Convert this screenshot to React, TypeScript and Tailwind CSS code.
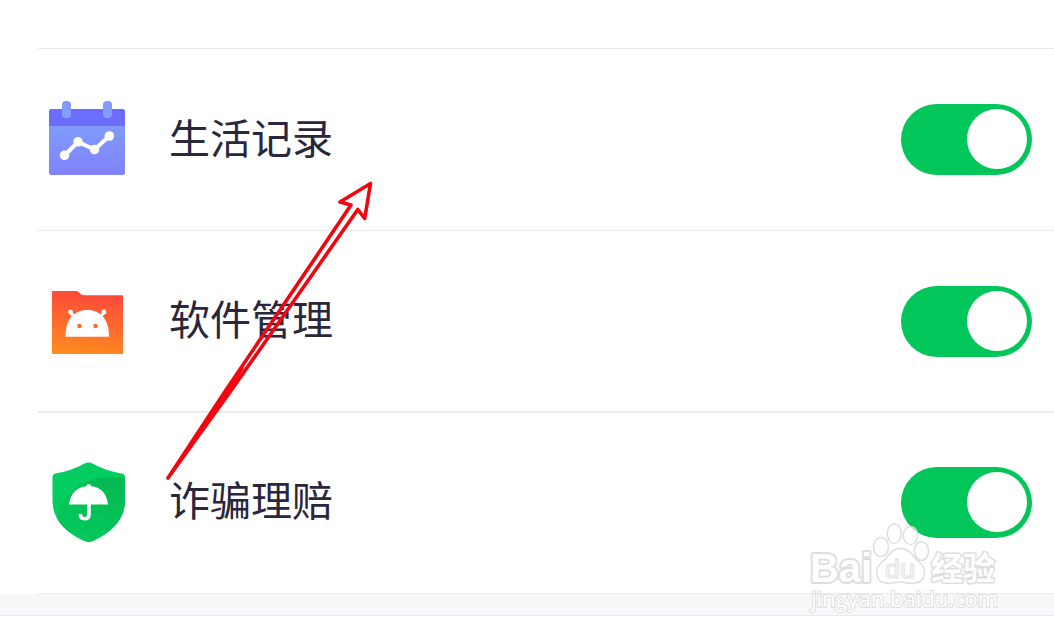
import React from 'react';

const CalendarIcon: React.FC = () => (
    <svg className="block" width="78" height="78" viewBox="48 101 78 78">
        <defs>
            <linearGradient id="calBody" x1="0" y1="0" x2="0" y2="1">
                <stop offset="0.2" stopColor="#7f9cfd" />
                <stop offset="1" stopColor="#8282fb" />
            </linearGradient>
            <linearGradient id="calRing" x1="0" y1="0" x2="0" y2="1">
                <stop offset="0" stopColor="#8894fc" />
                <stop offset="1" stopColor="#7ba4fc" />
            </linearGradient>
        </defs>
        <rect x="49" y="109" width="76" height="66" rx="2.5" fill="url(#calBody)" />
        <path d="M49 126V111.500Q49 109 51.500 109H122.500Q125 109 125 111.500V126Z" fill="#6c6cfd" />
        <rect x="62" y="101" width="9" height="17" rx="4" fill="url(#calRing)" />
        <rect x="103" y="101" width="9" height="17" rx="4" fill="url(#calRing)" />
        <path d="M64.500 155.500L78 142L94.500 149.500L109.500 136" fill="none" stroke="#fff" strokeWidth="4" />
        <circle cx="64.500" cy="155.300" r="4.800" fill="#fff" />
        <circle cx="78" cy="141.800" r="4.800" fill="#fff" />
        <circle cx="94.500" cy="149.500" r="4.800" fill="#fff" />
        <circle cx="109.300" cy="136" r="4.800" fill="#fff" />
    </svg>
);

const FolderIcon: React.FC = () => (
    <svg className="block" width="78" height="78" viewBox="48 282 78 78">
        <defs>
            <linearGradient id="folderBody" x1="0.55" y1="0" x2="0.4" y2="1">
                <stop offset="0" stopColor="#fd473c" />
                <stop offset="1" stopColor="#ff8a1e" />
            </linearGradient>
        </defs>
        <path d="M52 291H76Q78 291 79.500 292.800Q81.500 295.300 84 295.300H123V354H52Z" fill="url(#folderBody)" />
        <path d="M65.500 336.800C65.500 319 74 310 87.200 310S109 319 109 336.800Z" fill="#fff" />
        <path d="M70.500 312L74.500 318M104 312L100 318" stroke="#fff" strokeWidth="3" strokeLinecap="round" />
        <circle cx="70.500" cy="312" r="2.400" fill="#fff" />
        <circle cx="104" cy="312" r="2.400" fill="#fff" />
        <circle cx="79.500" cy="326" r="2.300" fill="#ff6b2d" />
        <circle cx="95.500" cy="326" r="2.300" fill="#ff6b2d" />
    </svg>
);

const ShieldIcon: React.FC = () => (
    <svg className="block" width="78" height="82" viewBox="48 461 78 82">
        <defs>
            <clipPath id="shieldClip">
                <path d="M84.500 463.500Q88.500 461.500 92.500 463.500Q106 471 122 473.500Q125 474.200 125 477V501C125 519 112 532 93.500 540.800Q88.500 543 84 540.800C65 532 52.500 519 52.500 501V477Q52.500 474.200 55.500 473.500Q71 471 84.500 463.500Z" />
            </clipPath>
            <linearGradient id="shieldShade" x1="0.8" y1="0" x2="0.3" y2="1">
                <stop offset="0" stopColor="#04b951" />
                <stop offset="1" stopColor="#03ca5c" />
            </linearGradient>
        </defs>
        <g clipPath="url(#shieldClip)">
            <rect x="48" y="460" width="80" height="84" fill="#03cd60" />
            <path d="M56 530C57 495 80 472 128 478V545H56Z" fill="url(#shieldShade)" />
        </g>
        <path d="M69 504.500C70 493 78 486.800 86.500 486.200V485.500Q86.500 484 88.700 484T91 485.500V486.200C100 486.800 107 493 108 504.500Z" fill="#fff" />
        <path d="M89 503V514.500Q89 518.700 84.500 518.700Q80.400 518.700 80.400 514" fill="none" stroke="#fff" strokeWidth="3.600" />
    </svg>
);

const Toggle: React.FC = () => (
    <button
        role="switch"
        aria-checked="true"
        className="flex h-[71px] w-[131px] shrink-0 items-start justify-end rounded-full bg-[#03c65a] pt-[5px] pr-[5px]"
    >
        <span className="size-[60px] rounded-full bg-white" />
    </button>
);

interface SettingRowProps {
    icon: React.ReactNode;
    label: string;
    className: string;
}

const SettingRow: React.FC<SettingRowProps> = ({ icon, label, className }) => (
    <div className={`ml-[38px] flex items-center border-t border-[#ebebec] pr-[22px] pl-[10px] ${className}`}>
        {icon}
        <span className="ml-[43px] flex-1 text-[41px] leading-[60px] text-[#2a273c]">{label}</span>
        <Toggle />
    </div>
);

// Hand-drawn arrow laid over the list
const Arrow: React.FC = () => (
    <svg className="pointer-events-none absolute inset-0" width="1054" height="636" viewBox="0 0 1054 636">
        <path
            d="M168 478L225 391.500L351 205L340 202L370.500 183.500L364.700 218.500L357.800 209.500L229 393.500Z"
            fill="none"
            stroke="#f0060f"
            strokeWidth="3.600"
            strokeLinejoin="round"
        />
        <path d="M168 478L239 369L245 366.500L229 393.500Z" fill="#f80410" />
    </svg>
);

const Watermark: React.FC = () => (
    <svg
        className="pointer-events-none absolute top-[516px] left-[800px]"
        width="210"
        height="104"
        viewBox="800 516 210 104"
        fill="#fff"
        fillOpacity="0.3"
        stroke="#dededf"
        strokeWidth="1.500"
    >
        <g fontFamily="'Liberation Sans', Arial, sans-serif" fontWeight="700" strokeLinejoin="round">
            <g fillOpacity="1" strokeWidth="4" paintOrder="stroke">
                <text x="810" y="581.500" fontSize="41" textLength="62" lengthAdjust="spacingAndGlyphs">Bai</text>
                <text x="931" y="580" fontSize="32" textLength="64" lengthAdjust="spacingAndGlyphs" strokeWidth="3" fontFamily="'Noto Sans CJK SC', sans-serif">经验</text>
            </g>
            <text x="885" y="577.500" fontSize="25" fontWeight="400" textLength="30" lengthAdjust="spacingAndGlyphs">du</text>
        </g>
        <ellipse cx="881" cy="547" rx="7.500" ry="9.500" />
        <ellipse cx="894.300" cy="533.700" rx="7" ry="9.800" />
        <ellipse cx="910.500" cy="535.500" rx="7.200" ry="9" />
        <ellipse cx="921.500" cy="551" rx="7" ry="9.500" />
        <path d="M900 548.500C910 548 912 556 919 562C928 569 926 583 914 583C908 584 905 582 900 582C895 582 891 584 886 583C875 582 874 569 882 562C889 556 891 549 900 548.500Z" />
        <text x="811" y="607" fontSize="21" textLength="187" lengthAdjust="spacingAndGlyphs" fillOpacity="1" strokeWidth="2" paintOrder="stroke" fontFamily="'Open Sans', sans-serif">jingyan.baidu.com</text>
    </svg>
);

const App: React.FC = () => {
    return (
        <div className="relative flex h-[636px] w-[1054px] flex-col overflow-hidden bg-white pt-12 font-['Liberation_Sans','Noto_Sans_CJK_SC',sans-serif]">
            <SettingRow icon={<CalendarIcon />} label="生活记录" className="h-[182px]" />
            <SettingRow icon={<FolderIcon />} label="软件管理" className="h-[181px]" />
            <SettingRow icon={<ShieldIcon />} label="诈骗理赔" className="h-[182px] border-t-2 pb-0.5" />
            <div className="ml-[38px] h-px bg-[#ebebec]" />
            <div className="h-[22px] border-b border-[#ebebee] bg-[#f8f8fa]" />
            <Arrow />
            <Watermark />
        </div>
    );
};

export default App;
